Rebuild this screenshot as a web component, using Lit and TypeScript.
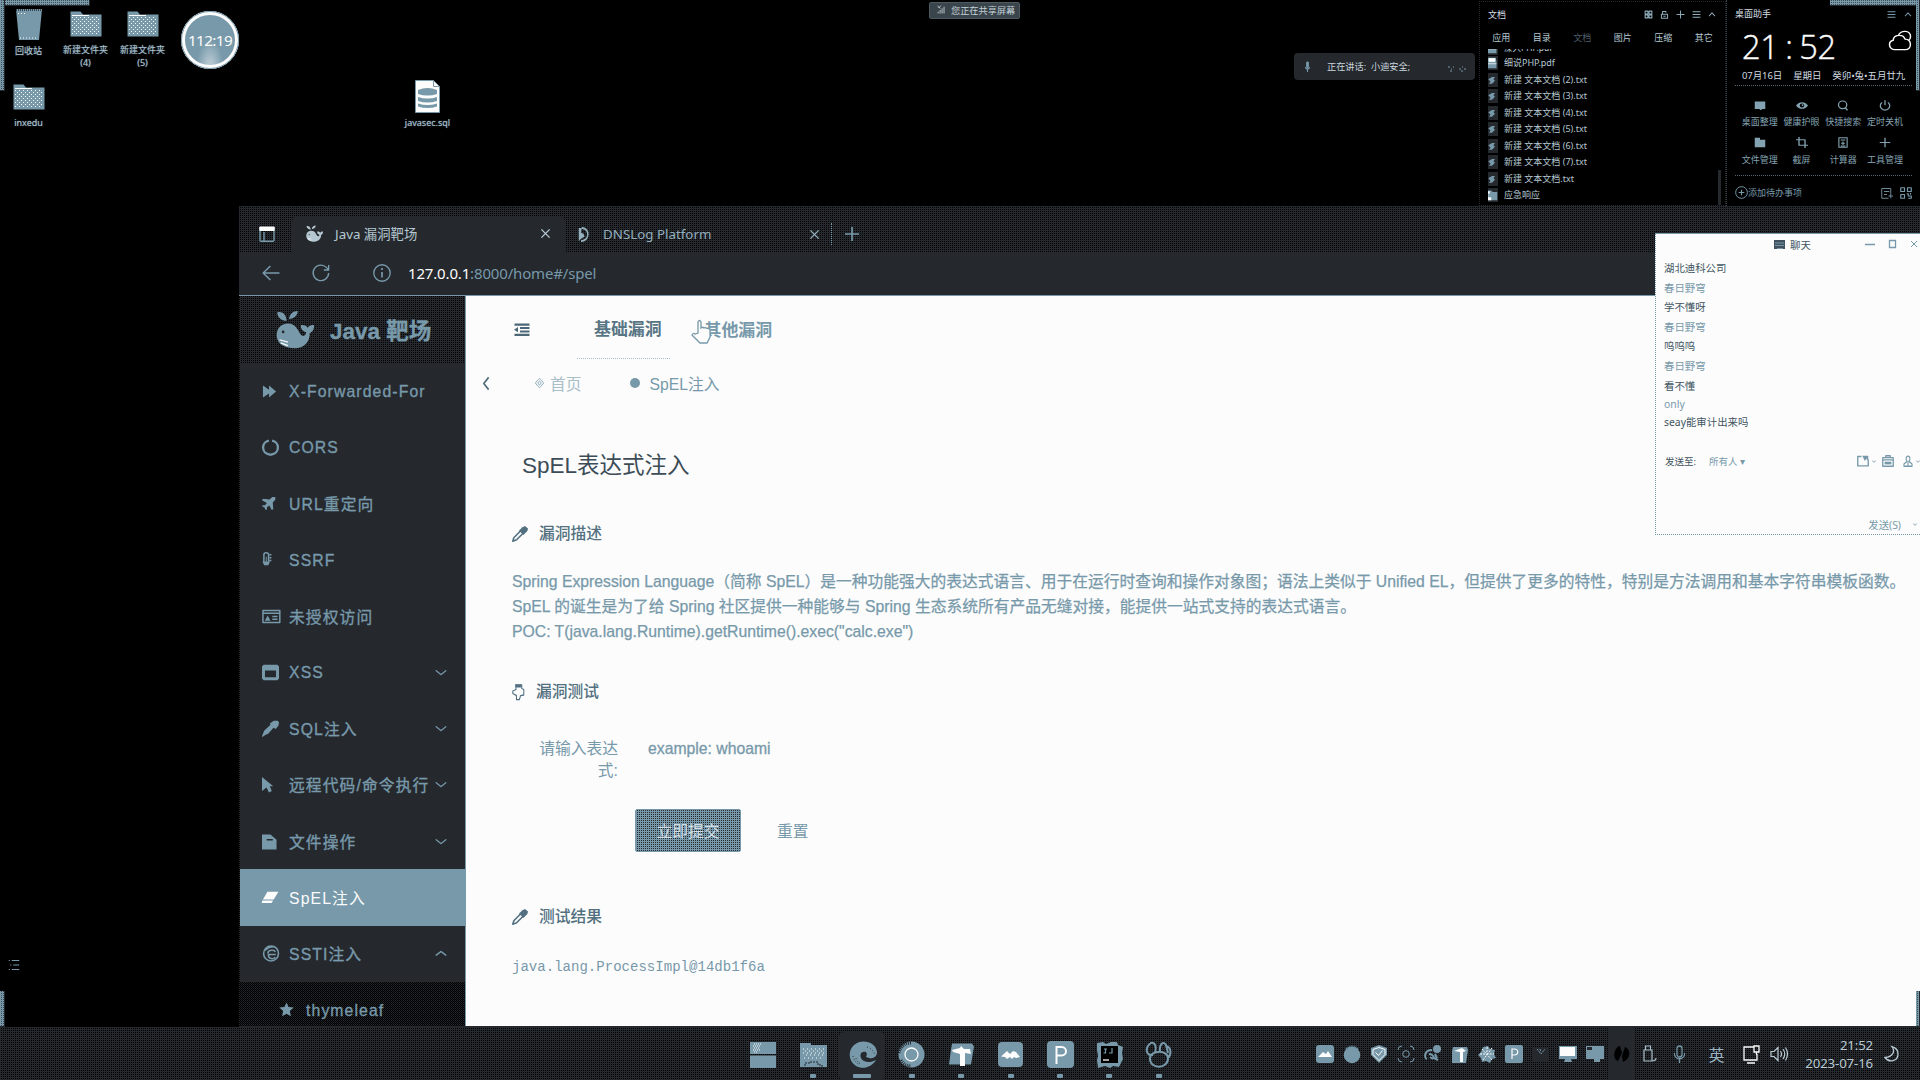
import { LitElement, html, css, svg, nothing } from "lit";
import { customElement, property } from "lit/decorators.js";

const base = css`
  * { box-sizing: border-box; }
  :host {
    --ink: #25282d;
    --steel: #7799aa;
    --paper: #fcfcfc;
    --dither: conic-gradient(#000 25%, #25282d 0) 0 0 / 2px 2px;
    display: block;
    font-family: "Noto Sans", "Noto Sans CJK SC", sans-serif;
    white-space: nowrap;
  }
  svg { display: block; flex: none; overflow: visible; }
`;

/* Every icon is drawn on a 16 x 16 grid in the current colour. */
const line = (d: string, w = 1.4) =>
  svg`<path d=${d} fill="none" stroke="currentColor" stroke-width=${w} stroke-linejoin="round"/>`;
const solid = (d: string, color = "currentColor") => svg`<path d=${d} fill=${color} fill-rule="evenodd"/>`;

const whale = svg`
  ${solid("M0.3 11C0 7.5 2.2 5.5 5 5.5C8.500 5.500 9.300 8.500 10.500 10.200C11.400 11.200 12.500 10.400 12.700 9.200C11 8.600 10.300 7.600 10.500 6.200C11.900 6 13 6.600 13.400 7.300C13.900 6.400 14.900 6 16 6.200C16.200 8 15.200 9.200 14.200 9.500C14.300 13.300 11.500 15.700 8 15.700C4 15.700.8 14.400.3 11Z")}
  ${solid("M0.5 1C2.6 0.4 4.3 1.8 4.5 4.4C2.2 4.4 0.6 3 0.5 1ZM9.2 0.4C7 0.4 5.7 1.8 5.5 3.700C7.600 3.600 9 2.300 9.200 0.400Z")}
  <circle cx="3" cy="9" r=".55" fill="#25282d"/>
  <path d="M1.500 12.200L5 13.200M2 13.500L5 14.600" stroke="#fcfcfc" stroke-width=".5"/>`;

const icons: Record<string, unknown> = {
  whale,
  grid: line("M2 2h5v5H2zM9 2h5v5H9zM2 9h5v5H2zM9 9h5v5H9z", 1.9),
  lock: line("M2.5 7.5h11v7h-11zM4.5 7V2.5h6V5M6 11h4", 1.8),
  plus: line("M8 1v14M1 8h14", 1.7),
  menu: line("M1 3h14M1 8h14M1 13h14", 1.9),
  up: line("M2 11l6-6 6 6", 1.8),
  down: line("M2 5l6 6 6-6", 1.7),
  caret: line("M1 4l7 8 7-8", 4),
  left: line("M11 1.5L5.5 8l5.500 6.500", 1.900),
  close: line("M2 2l12 12M14 2L2 14", 2),
  cloud: line("M4 15C0 14 .2 8.5 3.5 7.8C3.6 3.5 10 2.6 11.4 7C16 7.2 16 14.5 12 15ZM7 4.2C8 0 15.5-.2 15 5.2C15 6.7 14.3 7.6 13.6 8", 1),
  monitor: solid("M1 2h14v11h-4l-2 2-2-2H1z"),
  eye: svg`${solid("M0 8C4 1.5 12 1.5 16 8C12 14.5 4 14.5 0 8Z")}<circle cx="8" cy="8" r="3" fill="#000"/><circle cx="8.8" cy="7.4" r="1.3" fill="currentColor"/>`,
  search: svg`<circle cx="7.5" cy="7" r="5.5" fill="none" stroke="currentColor" stroke-width="1.7"/>${line("M11 11l3 4", 2)}`,
  power: line("M4 3.5a6.3 6.3 0 1 0 8 0M8 .5v7", 1.7),
  folder: solid("M1 1h7v3h7v11H1z"),
  crop: line("M4 0v12h12M0 4h12v12", 1.8),
  calc: line("M2.5 1h11v14h-11zM5 4.5h6M8 6.5v5M5.5 9h5M5 13h6", 1.5),
  note: line("M13 9V2H1v13h9M4 6h7M4 10h4M10 12h6M13 9v6", 1.2),
  qr: line("M1 1h5v5H1zM10 1h5v5h-5zM1 10h5v5H1zM9 9h2v3h4v3h-4M14 8v2", 1.6),
  addround: svg`<circle cx="8" cy="8" r="7.2" fill="none" stroke="currentColor" stroke-width="1.2"/>${line("M8 4.5v7M4.5 8h7", 1.4)}`,
  mic: solid("M5.5 3c0-3 5-3 5 0v5c0 3-5 3-5 0zM3.5 7c0 4.500 9 4.500 9 0v2c0 2-1.500 3-3.500 3.500V16H7v-3.500C5 12 3.500 11 3.500 9z"),
  signal: line("M2 15v-3M5.500 15V9M9 15V6M12.500 15V3M3 5l4-4M1 2l5 4", 1.6),
  miclined: line("M5.3 3.2c0-3.2 5.4-3.2 5.4 0v5c0 3.2-5.4 3.2-5.4 0zM2.5 7c0 7 11 7 11 0M8 12.500V16", 1.3),
  sidebar: svg`${line("M1 1.8h14v12.4a1 1 0 0 1-1 1H2a1 1 0 0 1-1-1zM5 6v9", 1.4)}<rect x=".3" y=".5" width="15.4" height="4.4" rx="1" fill="#fcfcfc"/>`,
  dns: svg`${solid("M1 1h4l-1 5 3 1 2 3-4 2-4 3z")}${line("M5 1C16 1 16 15 4 15", 2)}`,
  back: line("M15.5 8H1M7.5 1L1 8l6.500 7", 1.3),
  reload: line("M14.800 8a6.900 6.900 0 1 1-2-5l2 2.200M14.800 .8v4.500h-4.300", 1.2),
  info: svg`<circle cx="8" cy="8" r="7.3" fill="none" stroke="currentColor" stroke-width="1.2"/>${line("M8 7v5M8 3.600v1.700", 1.5)}`,
  forward: solid("M1 1.5L7.5 6V1.5L15 8l-7.5 6.5V10L1 14.5z"),
  ring: line("M6.5 1.5a6.6 6.6 0 0 0 0 13a6.6 6.6 0 0 0 3 0a6.6 6.6 0 0 0 0-13", 2.2),
  plane: solid("M1 3l7 .8L11 1h3.2v3L11.5 7 12 14l-1.6 1-2.600-4.800L5.300 12v2.500L4 15l-1.500-2.700L0 11l.8-1.200h2.400L5.200 7.400 0 4.400z"),
  thermo: svg`${line("M2 3c0-3 5-3 5 0v6.5c2.5 4.5-7.5 4.5-5 0zM8 3h2M8 6h2M8 9h2", 1.600)}${solid("M4 5h1v5h2v4H2v-4h2z")}`,
  card: svg`${line("M1 1.500h18v13H1zM1 4.500h18M11 8h5.500M11 11h5.500", 1.600)}${solid("M3 12.500L6 7l3 5.500z")}`,
  frame: solid("M1.500.8h13L16 2.400v11.200l-1.500 1.600h-13L0 13.600V2.400zM2.800 6v6.400h10.400V6z"),
  dropper: solid("M11 .8h3.8L16 2l-.5 3.500-2.700 3-2-1.200-5 5.700-2.800 1L.6 16 0 15.400 2 10l6-5.600-.6-1.200L11 .8z"),
  pen: svg`${line("M9 4.500L1.800 11.700.8 15.200l3.800-1.400 7-7", 1.600)}${solid("M10.500 1.200L13 0l3 2.400-.6 2.600-4 4L7 4.500z")}`,
  pointer: solid("M0 0l12 9.800H8.300L10.500 15 7.400 16.500l-2.600-5.200L0 15z"),
  file: solid("M0 .5h9l6.500 5.500v10.500H0zM5 5.400h6.500V7H5z"),
  eraser: solid("M5.800 1.800H17.500L12.500 10.200H1zM.4 11.200h11.400L10.300 13.800H-.4z"),
  ie: svg`${line("M13 9H6C6 13.500 10.500 13.800 12.500 11.500M5.500 8C5.500 4.500 11.500 4 12.500 6.500M8.500 1a7 7 0 1 0 7 7C15.500 4 12.500 1 8.500 1M3 5q3-3.500 8-3.500", 1.500)}`,
  star: solid("M8 .5l2.200 4.900 5.400.5-4 3.700 1.100 5.600L8 12.400l-4.700 2.800 1.100-5.600-4-3.700 5.400-.5z"),
  outdent: svg`${line("M.5 2h15M6 6.200h9.500M6 10.400h9.500M.5 14.600h15", 2.500)}${solid("M4 5v6.500L0 8.200z")}`,
  bulb: svg`${line("M4.500 1h7.500v3.500l2.500 1v5.500l-4 .7-1.500 4H5.500v-4L1 9.500V7l4-1.500z", 1.300)}${solid("M4.500.5h7v3h-7z")}`,
  rosette: line("M8 .7l3 2.300 4.300 5-4.300 5-3 2.300-3-2.300-4.300-5L5 3zM8 4.500L11 8l-3 3.500L5 8z", 1.3),
  cam: svg`${line("M15 6v8.500H1V2h5", 1.800)}${solid("M7 1h8v7l-2.500-3-2 3L9 5z")}`,
  bag: svg`${line("M1 3.500h14V15H1zM5 3V1h6v2M1 6.500h14", 1.700)}${solid("M3.500 9h9v3.500h-9z")}`,
  person: svg`${line("M5 4.500C5 .5 11 .5 11 4.500S9.500 8 9.500 8.500L14.500 12v3h-13v-3L6.500 8.500C6.500 8 5 7 5 4.500zM8 9v6", 1.700)}`,
  list: line("M5 2h10M7 8h8M5 14h10M1 2h1.500M3 8h1.500M1 14h1.500", 1.400),
};

const icon = (name: string, w: number, h = w, cls = "") =>
  html`<svg class=${cls} width=${w} height=${h} viewBox="0 0 16 16" preserveAspectRatio="none">${icons[name] ?? nothing}</svg>`;

@customElement("desktop-shortcut")
export class DesktopShortcut extends LitElement {
  @property() kind = "folder";
  @property() label = "";
  static styles = [base, css`
    :host { width: 57px; display: flex; flex-direction: column; align-items: center; color: var(--steel); }
    .art { height: 35px; display: flex; align-items: flex-end; }
    .label { margin-top: 6px; font-size: 9px; line-height: 13px; text-align: center; white-space: pre; color: #a4bcc8; text-shadow: 0 0 1px var(--steel); }
    .near { margin-top: 3px; }
  `];
  private art() {
    if (this.kind === "bin")
      return html`<svg width="28" height="33" viewBox="0 0 28 33"><path d="M1 1h26l-3 31H4z" fill="#7799aa"/><path d="M1 2h26" stroke="#25282d" stroke-width="1.500" stroke-dasharray="1 1"/><path d="M3 5.500h7M5 30h18" stroke="#fcfcfc" stroke-dasharray="1 2"/></svg>`;
    if (this.kind === "sql")
      return html`<svg width="25" height="33" viewBox="0 0 25 33"><path d="M.5.5h18l6 6v26H.5z" fill="#fcfcfc" stroke="#7799aa"/><path d="M18.500.5v6h6" fill="none" stroke="#7799aa"/><path d="M3 10q9.500-4 19 0v4q-9.500 3-19 0zM3 17q9.500 3 19 0v4q-9.500 3-19 0zM3 23.500q9.500 3 19 0v3q-9.500 3-19 0z" fill="#7799aa"/></svg>`;
    return html`<svg width="32" height="26" viewBox="0 0 32 26"><defs><pattern id="s" width="4" height="4" patternUnits="userSpaceOnUse"><path d="M0 0h1v1H0zM2 2h1v1H2z" fill="#fcfcfc"/></pattern></defs><path d="M.5.5h10l2.500 3h18.500v22H.5z" fill="#7799aa"/><path d="M2 5h28v19H2z" fill="url(#s)"/><path d="M2 4.500h17" stroke="#fcfcfc"/></svg>`;
  }
  render() {
    return html`<div class="art">${this.art()}</div><div class="label ${this.kind === "folder" ? "" : "near"}">${this.label}</div>`;
  }
}

@customElement("doc-panel")
export class DocPanel extends LitElement {
  static styles = [base, css`
    :host { color: #b6c9d3; font-size: 9px; line-height: 12px; border: 1px dotted #25282d; padding: 6px 9px 0 8px; display: flex; flex-direction: column; }
    .head { display: flex; align-items: center; height: 13px; color: #d3dee4; }
    .tools { margin-left: auto; display: flex; gap: 7px; color: #8fadbb; }
    .tabs { display: grid; grid-template-columns: repeat(6, 40.500px); height: 12px; margin: 11px 0 5px -8px; text-align: center; padding-left: 1px; }
    .dim { color: #4b5d68; }
    .body { display: flex; flex: 1; overflow: hidden; justify-content: space-between; margin-right: -5px; }
    .list { margin-top: -10.500px; }
    .row { height: 16.500px; display: flex; align-items: center; gap: 6px; }
    .row:first-child { font-size: 8.500px; padding-top: 2px; }
    .glyph { width: 12px; height: 14px; margin-left: -2px; background: var(--ink); display: grid; place-items: center; color: var(--steel); }
    .bar { width: 3px; height: 35px; background: var(--ink); align-self: flex-end; }
  `];
  render() {
    const files = ["深入PHP.pdf", "细说PHP.pdf", ...[2, 3, 4, 5, 6, 7].map((n) => `新建 文本文档 (${n}).txt`), "新建 文本文档.txt", "应急响应"];
    const glyph = (f: string) =>
      f.endsWith(".txt") ? svg`<path d="M3 7l5-3 4 0-2 3 2 2-4 4H4l2-3z" fill="currentColor"/>`
      : f.endsWith(".pdf") ? svg`<path d="M2 1h11l1 5v9H1V8h1z" fill="#7799aa"/><path d="M4 2h8v4H4zM2 9h12" stroke="#fcfcfc" fill="#fcfcfc"/>`
      : svg`<path d="M1 2h6l2 2h6v11H1z" fill="#7799aa"/><path d="M1 3h4v3H3v5h4v4H1z" fill="#fcfcfc"/>`;
    return html`
      <div class="head"><span>文档</span>
        <span class="tools">${icon("grid", 9)}${icon("lock", 9)}${icon("plus", 9)}${icon("menu", 9)}${icon("up", 8, 9)}</span></div>
      <div class="tabs">${["应用", "目录", "文档", "图片", "压缩", "其它"].map((t, i) => html`<span class=${i === 2 ? "dim" : ""}>${t}</span>`)}</div>
      <div class="body">
        <div class="list">${files.map((f) => html`<div class="row"><span class="glyph"><svg width="12" height="12" viewBox="0 0 16 16">${glyph(f)}</svg></span><span>${f}</span></div>`)}</div>
        <div class="bar"></div>
      </div>`;
  }
}

@customElement("assistant-panel")
export class AssistantPanel extends LitElement {
  static styles = [base, css`
    :host { color: #b9cad3; font-size: 9px; line-height: 12px; padding: 8px 8px 0 8px; border-left: 1px dotted #3a444b; display: flex; flex-direction: column; }
    .head { display: flex; align-items: center; height: 13px; color: #d3dee4; }
    .tools { margin-left: auto; display: flex; gap: 8px; color: var(--steel); }
    .now { display: flex; align-items: center; justify-content: space-between; height: 46px; padding-left: 7px; color: var(--paper); }
    .now svg { margin-top: -7px; }
    .time { font-size: 32.500px; line-height: 46px; word-spacing: -1.200px; letter-spacing: -.4px; padding-top: 6px; font-weight: 400; font-family: "Open Sans", "Noto Sans", sans-serif; font-weight: 300; -webkit-text-stroke: .4px; }
    .date { display: flex; gap: 11px; height: 20px; align-items: center; padding: 1px 0 0 7px; font-size: 9.500px; border-bottom: 1px dotted #55656f; color: #cfdbe1; letter-spacing: -.1px; }
    .tiles { display: grid; grid-template-columns: repeat(4, 41.700px); grid-auto-rows: 37.500px; padding: 14px 0 0 4px; height: 93px; border-bottom: 1px dotted #55656f; color: #84a3b2; }
    .tile { display: flex; flex-direction: column; align-items: center; gap: 5.500px; }
    .foot { display: flex; align-items: center; gap: 7px; height: 31px; padding-top: 3px; color: var(--steel); }
    .foot .add { margin-right: auto; display: flex; align-items: center; }
  `];
  render() {
    const tiles = [["monitor", "桌面整理"], ["eye", "健康护眼"], ["search", "快捷搜索"], ["power", "定时关机"], ["folder", "文件管理"], ["crop", "截屏"], ["calc", "计算器"], ["plus", "工具管理"]];
    return html`
      <div class="head"><span>桌面助手</span><span class="tools">${icon("menu", 9)}${icon("up", 8, 9)}</span></div>
      <div class="now"><span class="time">21 : 52</span>${icon("cloud", 24, 21)}</div>
      <div class="date"><span>07月16日</span><span>星期日</span><span>癸卯•兔•五月廿九</span></div>
      <div class="tiles">${tiles.map(([i, t]) => html`<div class="tile">${icon(i, 12, 11)}<span>${t}</span></div>`)}</div>
      <div class="foot"><span class="add">${icon("addround", 13)}<span>添加待办事项</span></span>${icon("note", 12)}${icon("qr", 12)}</div>`;
  }
}

@customElement("chat-window")
export class ChatWindow extends LitElement {
  static styles = [base, css`
    :host { background: var(--paper); border: 1px dotted var(--steel); border-top: 1px solid var(--steel); border-right: 0; color: #3f5562; font-size: 10.400px; display: flex; flex-direction: column; }
    .title { height: 20px; display: grid; grid-template-columns: 1fr auto; align-items: center; padding-left: 118px; }
    .name, .controls, .to { display: flex; align-items: center; }
    .name { gap: 5px; }
    .controls { gap: 14px; color: var(--steel); padding-right: 2px; }
    .log { padding: 5px 0 0 8px; }
    .msg { line-height: 19.600px; height: 19.600px; }
    .from { color: var(--steel); }
    .tight { height: 17.500px; line-height: 17.500px; }
    .to { margin-top: 20px; height: 20px; padding-left: 9px; font-size: 9.500px; color: var(--steel); }
    .to b { font-weight: 400; color: #3f525d; margin-right: 13px; }
    .tools { margin-left: auto; display: flex; align-items: center; gap: 3px; }
    .gap { margin-right: 3px; }
    .send { margin-top: auto; height: 19px; display: flex; justify-content: flex-end; align-items: center; gap: 12px; color: var(--steel); padding-right: 3px; }
  `];
  render() {
    const log = [["", "湖北迪科公司"], ["from", "春日野穹"], ["", "学不懂呀"], ["from", "春日野穹"], ["", "呜呜呜"], ["from", "春日野穹"], ["", "看不懂"], ["from tight", "only"], ["tight", "seay能审计出来吗"]];
    return html`
      <div class="title">
        <span class="name"><svg width="11" height="9" viewBox="0 0 11 9"><path d="M0 0h11v9H0z" fill="#3f525d"/><path d="M1 3h9M1 5.500h9M3 8.500h6" stroke="#7799aa"/></svg>聊天</span>
        <span class="controls">
          <svg width="10" height="9" viewBox="0 0 10 9"><path d="M0 4.500h10" stroke="currentColor" stroke-width="1.500"/></svg>
          <svg width="7" height="8" viewBox="0 0 7 8"><path d="M.5.5h6v7h-6z" fill="none" stroke="currentColor" stroke-width="1.300"/></svg>
          ${icon("close", 8)}</span>
      </div>
      <div class="log">${log.map(([c, t]) => html`<div class="msg ${c}">${t}</div>`)}</div>
      <div class="to"><b>发送至:</b><span>所有人 ▾</span>
        <span class="tools">${icon("cam", 12)}${icon("caret", 4, 3, "gap")}${icon("bag", 12)}<span class="gap"></span>${icon("person", 10, 12)}${icon("caret", 4, 3)}</span></div>
      <div class="send"><span>发送(S)</span>${icon("caret", 4, 3)}</div>`;
  }
}

@customElement("range-page")
export class RangePage extends LitElement {
  static styles = [base, css`
    :host { display: grid; grid-template-columns: 227px 1fr; height: 731px; overflow: hidden; font-family: "Liberation Sans", "Noto Sans CJK SC", sans-serif; font-size: 15.750px; color: var(--steel); border-top: 1px solid var(--steel); }
    .side { background: var(--ink); border-right: 1px solid var(--steel); border-left: 1px dotted #000; overflow: hidden; -webkit-text-stroke: .35px; }
    .logo { height: 67px; display: flex; align-items: center; gap: 16px; padding-left: 36px; background: var(--dither); font-weight: 700; font-size: 22.500px; }
    .logo span { padding-bottom: 2px; }
    .item { height: 56.250px; display: flex; align-items: center; padding: 0 17px 0 22px; letter-spacing: 1.120px; }
    .item .latin { padding-top: 2px; }
    .item .mark { width: 27px; }
    .item .more { margin-left: auto; }
    .on { background: var(--steel); color: var(--paper); -webkit-text-stroke: 0; }
    .sub { background: conic-gradient(#25282d 25%, #000 0 50%, #16181b 0 75%, #000 0) 0 0 / 2px 2px; padding-left: 39px; }
    .sub .mark { width: 27px; }
    .main { background: var(--paper); overflow: hidden; }
    .nav { height: 64px; display: flex; font-size: 16.900px; font-weight: 700; align-items: center; padding: 0 0 0 48px; }
    .nav > svg { margin-top: 2px; color: #4c6876; }
    .nav .tab { margin-left: 47px; padding: 3px 8px 0 17px; height: 62px; line-height: 59px; border-bottom: 1px dotted #a5bcc8; color: #587584; }
    .nav .cursor { margin: 7px -6px 0 21px; z-index: 1; }
    .crumbs { height: 46px; display: flex; align-items: center; padding-left: 13px; }
    .crumbs > svg { color: #4f6b79; }
    .crumbs .home { display: flex; align-items: center; gap: 6px; margin: 0 48px 0 42px; color: #a9bec9; }
    .home svg { color: var(--steel); }
    .dot { width: 10px; height: 10px; border-radius: 50%; background: var(--steel); margin-right: 10px; }
    .content { padding: 42px 18px 0 46px; }
    h1 { margin: 0 0 0 10px; font-size: 22.500px; line-height: 36px; font-weight: 400; color: #3c4d57; }
    h2 { margin: 0; font-size: 15.750px; line-height: 26px; font-weight: 500; display: flex; align-items: center; gap: 11px; color: #527080; }
    .t1 { margin-top: 37px; }
    .desc { margin-top: 22px; line-height: 25.200px; -webkit-text-stroke: .25px var(--steel); }
    .form { display: grid; grid-template-columns: 106px 1fr; column-gap: 30px; margin-top: 32px; }
    .label { text-align: right; line-height: 22.500px; white-space: normal; padding: 1px 0 0 26px; }
    .hint { line-height: 22.500px; padding-top: 1px; -webkit-text-stroke: .3px var(--steel); }
    .actions { grid-column: 2; display: flex; align-items: center; gap: 36px; margin: 26px 0 0 -13px; }
    .submit { width: 106px; height: 43px; border: 1px solid var(--steel); border-radius: 2px; background: conic-gradient(#25282d 25%, #7799aa 0) 0 0 / 2px 2px; color: #d4dfe5; line-height: 43px; text-align: center; }
    .result { margin-top: 25px; font: 14.060px/25px "Liberation Mono", monospace; }
    .t2 { margin-top: 34px; }
    .t3 { margin-top: 52px; }
  `];
  render() {
    const items: [string, string, string?, number?][] = [
      ["forward", "X-Forwarded-For"], ["ring", "CORS", undefined, 17], ["plane", "URL重定向"], ["thermo", "SSRF"], ["card", "未授权访问"],
      ["frame", "XSS", "down", 17], ["dropper", "SQL注入", "down", 17], ["pointer", "远程代码/命令执行", "down"], ["file", "文件操作", "down"],
      ["eraser", "SpEL注入"], ["ie", "SSTI注入", "up", 17],
    ];
    const latin = (t: string) => (/^[\x00-\x7f]+$/.test(t) ? "latin" : "");
    return html`
      <aside class="side">
        <div class="logo">${icon("whale", 38, 39)}<span>Java 靶场</span></div>
        ${items.map(([i, t, more, w]) => html`<div class="item ${i === "eraser" ? "on" : ""}"><span class="mark">${icon(i, w ?? 15)}</span><span class=${latin(t)}>${t}</span>${more ? icon(more, 14, 11, "more") : nothing}</div>`)}
        <div class="item sub"><span class="mark">${icon("star", 15)}</span><span class="latin">thymeleaf</span></div>
      </aside>
      <main class="main">
        <div class="nav">${icon("outdent", 16, 13)}<span class="tab">基础漏洞</span>
          <svg class="cursor" width="20" height="25" viewBox="0 0 20 25"><path d="M7 14V3q1.500-3 3 0v6q1.500-1.500 3 0 1.500-1 3 .500 1.500-.8 3 1V18l-3 6H9l-8-8q1-2.500 3-1z" fill="#fcfcfc" stroke="#7799aa" stroke-width="1.300"/></svg>
          <span>其他漏洞</span></div>
        <div class="crumbs">${icon("left", 14, 15)}<span class="home">${icon("rosette", 9, 10)}首页</span><span class="dot"></span><span>SpEL注入</span></div>
        <div class="content">
          <h1>SpEL表达式注入</h1>
          <h2 class="t1">${icon("pen", 16)}漏洞描述</h2>
          <div class="desc">Spring Expression Language（简称 SpEL）是一种功能强大的表达式语言、用于在运行时查询和操作对象图；语法上类似于 Unified EL，但提供了更多的特性，特别是方法调用和基本字符串模板函数。<br>SpEL 的诞生是为了给 Spring 社区提供一种能够与 Spring 生态系统所有产品无缝对接，能提供一站式支持的表达式语言。<br>POC: T(java.lang.Runtime).getRuntime().exec("calc.exe")</div>
          <h2 class="t2">${icon("bulb", 13, 16)}漏洞测试</h2>
          <div class="form">
            <div class="label">请输入表达式:</div><div class="hint">example: whoami</div>
            <div class="actions"><span class="submit">立即提交</span><span>重置</span></div>
          </div>
          <h2 class="t3">${icon("pen", 16)}测试结果</h2>
          <div class="result">java.lang.ProcessImpl@14db1f6a</div>
        </div>
      </main>`;
  }
}

@customElement("browser-window")
export class BrowserWindow extends LitElement {
  static styles = [base, css`
    :host { background: var(--ink); color: var(--steel); }
    .strip { height: 46px; display: flex; align-items: flex-end; background: var(--dither); border-top: 1px solid #25282d; font-size: 13.350px; }
    .tab, .pre { height: 36px; display: flex; align-items: center; }
    .pre { width: 53px; padding-left: 20px; }
    .tab { padding: 0 14px; }
    .a { width: 273px; background: var(--ink); border-radius: 6px 6px 0 0; padding: 0 14px 2px 14px; gap: 12px; color: #b5c8d2; }
    .b { width: 266px; gap: 13px; padding: 0 11px 0 13px; color: #94b0be; }
    .x { margin-left: auto; }
    .plus { height: 22px; margin-bottom: 7px; display: flex; align-items: center; border-left: 1px dotted var(--steel); padding-left: 12px; }
    .bar { height: 43px; display: flex; align-items: center; padding: 0 0 1px 23px; font-size: 15px; }
    .bar svg + svg { margin-left: 32px; }
    .bar svg + .r2 { margin-left: 43px; }
    .url { margin-left: 17px; letter-spacing: -.16px; }
    .url b { font-weight: 400; color: var(--paper); }
  `];
  render() {
    return html`
      <div class="strip">
        <div class="pre">${icon("sidebar", 16)}</div>
        <div class="tab a">${icon("whale", 17)}<span>Java 漏洞靶场</span>${icon("close", 11, 11, "x")}</div>
        <div class="tab b">${icon("dns", 12, 15)}<span>DNSLog Platform</span>${icon("close", 11, 11, "x")}</div>
        <div class="plus">${icon("plus", 16)}</div>
      </div>
      <div class="bar">${icon("back", 18, 16)}${icon("reload", 18)}${icon("info", 18, 18, "r2")}<span class="url"><b>127.0.0.1</b>:8000/home#/spel</span></div>
      <range-page></range-page>`;
  }
}

@customElement("task-bar")
export class TaskBar extends LitElement {
  static styles = [base, css`
    :host { background: var(--dither); height: 53px; display: grid; grid-template-columns: 739px 1fr auto; color: var(--steel); border-top: 1px solid var(--ink); }
    .apps { grid-column: 2; display: flex; padding-top: 4px; }
    .app { width: 49.400px; height: 48px; padding-top: 9px; display: flex; flex-direction: column; align-items: center; justify-content: space-between; }
    .now { background: var(--ink); border-radius: 5px; width: 46px; margin: 0 1.700px; }
    .pip { width: 6px; height: 4px; border-radius: 1px; background: var(--steel); margin-bottom: 2px; }
    .now .pip { width: 18px; }
    .none { visibility: hidden; }
    .tray { display: flex; align-items: center; color: var(--steel); }
    .slot { width: 27px; height: 52px; display: grid; place-items: center; }
    .lit { background: var(--ink); }
    .w30 { width: 34px; }
    .lang { width: 41px; font-size: 16px; text-align: center; color: #9ab3c0; }
    .w28 { width: 28px; color: #b9cbd4; }
    .clock { width: 80px; text-align: right; font-size: 13.250px; line-height: 18px; color: #b9cbd4; letter-spacing: -.15px; }
    .moon { width: 38px; padding-right: 1px; color: #b9cbd4; margin-right: 9px; }
  `];
  render() {
    const s = "#7799aa", w = "#fcfcfc", k = "#25282d";
    const apps = [
      svg`<path d="M0 1h26v12H0zM0 14.500h26V27H0z" fill=${s}/><path d="M4 3h7M3 5h8M4 7h6M3 9h7M4 11h4" stroke=${w} stroke-dasharray="1 1"/>`,
      svg`<path d="M0 2h11v2h16v22H0z" fill=${s}/><path d="M3 8h22M5 10h20M3 12h22M6 14h18M4 17h20" stroke=${w} stroke-dasharray="1 3"/><path d="M5 25v-3h5v-1h8v3h4v2" fill="none" stroke=${k} stroke-dasharray="2 1"/>`,
      svg`<path d="M27 19C23 26 14 29 7 25C-1 20-1 9 5 4C13-3 27 1 28 11C28 16 24 18 20 17L17 16C19 12 17 10 14 11C10 12 11 18 15 20C19 22 23 21 27 19Z" fill=${s}/><path d="M4 15q1 6 7 9M7 17q1 4 5 6M18 6q6 2 8 8" fill="none" stroke=${k} stroke-dasharray="1 2"/>`,
      svg`<circle cx="13.500" cy="13.500" r="13" fill=${s}/><path d="M2 8q4-6 11-6M1 12q1-5 5-8M3 19q3 6 10 6" fill="none" stroke=${k} stroke-width="3" stroke-dasharray="1 1"/><circle cx="13.500" cy="13.500" r="6.500" fill=${s} stroke=${w} stroke-width="1.300"/>`,
      svg`<path d="M4 2.500h20l2 3-3 18H1l2-15z" fill=${s}/><path d="M4 9l8-2 1-2 3 3h6l1 5-6-1v13h-5V13l-7-2z" fill=${w}/>`,
      svg`<rect x="1" y="1" width="25" height="25" rx="4" fill=${s}/><path d="M4 15.500l6-5.500 3 3 3-3 3 1 4 5-4 1-2-1-2 2-2-2-3 2-2-2z" fill=${w}/>`,
      svg`<rect y="0" width="27" height="27" rx="4" fill=${s}/><path d="M9.500 23V6h5c6 0 6 8.500 0 8.500h-5" fill="none" stroke=${w} stroke-width="2"/>`,
      svg`<path d="M1 2l6-1 3 2 5-2h6l1 3 5 2-1 6 1 6-4 8-6-1-3 2-5-2-7 2-1-8 1-4-1-6z" fill=${s}/><path d="M5 5h17v17H5z" fill="#000"/><path d="M8 8h3M9.500 8v4h-2M16 7v5h-3" fill="none" stroke=${s} stroke-width="1.200"/><path d="M7 19h6" stroke=${w} stroke-width="1.300"/>`,
      svg`<path d="M8 14C0 15 0 6 6 2c4-1 6 4 4 9M15 11C14 2 19 0 21 4l2 8M21 5c5 1 6 8 2 12M5 17.500C5 9 23 8 23 17.500C23 28 5 29 5 17.500z" fill="none" stroke=${s} stroke-width="2"/>`,
    ];
    const tray = [
      svg`<rect width="18" height="18" rx="3" fill=${s}/><path d="M2 12l5-5 3 2 2-3 4 6z" fill=${w}/>`,
      svg`<circle cx="9" cy="10" r="8.300" fill=${s}/><path d="M3 4q6-5 12 0" stroke=${s} stroke-dasharray="1 1" fill="none" stroke-width="2"/>`,
      svg`<path d="M9 0l8 3v7l-8 8-8-8V3z" fill=${s}/><path d="M9 2.500l6 2v5l-6 6-6-6v-5zM5.500 7.500l3 3 4-5" fill="none" stroke=${w}/>`,
      svg`<circle cx="9" cy="9" r="3.300" fill="none" stroke=${s}/><path d="M1 5q0-4 4-4M13 1q4 0 4 4M17 13q0 4-4 4M5 17q-4 0-4-4" fill="none" stroke=${s}/>`,
      svg`<circle cx="13" cy="4" r="4" fill=${s}/><path d="M8 5C0 5 0 13 3 14M5 9q4 0 5 4l4 2M11 9l2 4M6 12l3 2" fill="none" stroke=${s} stroke-width="2"/>`,
      svg`<path d="M2 2h14l1 3-2 13H1V6z" fill=${s}/><path d="M3 6l8-3 4 3-3 1v10H9V7z" fill=${w}/>`,
      svg`<path d="M5 2l5-1 2 3 5 1-1 4 2 4-4 1-2 4-4-2-4 1-1-4-3-3 3-3z" fill=${s}/><path d="M4 4l10 11M14 3L5 15M2 9h14M9 2v6" stroke=${w} stroke-dasharray="2 1.200"/>`,
      svg`<rect width="18" height="18" rx="2" fill=${s}/><path d="M7 14V4h2c5 0 5 6 0 6H7" fill="none" stroke=${w} stroke-width="1.200"/>`,
      svg`<rect x="1" y="3" width="16" height="14" fill=${k}/><path d="M5 4l4 5 4-5M8 4l1 3" stroke=${s} fill="none" stroke-dasharray="2 1"/>`,
      svg`<path d="M0 1h18v13h-6l1 3H5l1-3H0z" fill=${s}/><path d="M1 2h15v9H1z" fill=${w}/>`,
      svg`<path d="M0 1h18v13h-4v3H8v-3H0z" fill=${s}/><path d="M1 2h5v3H1z" fill=${k}/>`,
      svg`<path d="M7 1C1 2-1 14 5 16L9 8zM12 2c6 2 6 12-2 15l-1-6z" fill="#000"/>`,
      svg`<path d="M4 5h8v11H4zM5.500 5V1h5v4M12 16q4 0 4-3" fill="none" stroke="#a9bfca" stroke-width="1.200"/>`,
    ];
    return html`
      <div class="apps">${apps.map((a, i) => html`<div class="app ${i === 2 ? "now" : ""}"><svg width="27" height="27" viewBox="0 0 27 27">${a}</svg><span class="pip ${i ? "" : "none"}"></span></div>`)}</div>
      <div class="tray">
        ${tray.map((t, i) => html`<span class="slot ${i === 11 ? "lit" : ""}"><svg width="18" height="18" viewBox="0 0 18 18">${t}</svg></span>`)}
        <span class="slot w30">${icon("miclined", 15, 18)}</span>
        <span class="lang">英</span>
        <span class="slot w28"><svg width="19" height="19" viewBox="0 0 19 19"><path d="M12 2H2v13h13v-6M5 18h8M12 1h5v6h-5zM14.500 7v3" fill="none" stroke="#fcfcfc" stroke-width="1.300"/></svg></span>
        <span class="slot w28"><svg width="18" height="16" viewBox="0 0 18 16"><path d="M1 5.500h3l4-4v13l-4-4H1zM10.500 5q2 3 0 6M13 3q3.500 5 0 10M15.500 1.500q4 6.500 0 13" fill="none" stroke="currentColor" stroke-width="1.200"/></svg></span>
        <span class="clock">21:52<br>2023-07-16</span>
        <span class="slot moon"><svg width="15" height="16" viewBox="0 0 15 16"><path d="M8 .7C12 6 8 11 1 11.500C5 17 14 15.500 14 8C14 4 11 1.500 8 .7Z" fill="none" stroke="currentColor" stroke-width="1.300"/></svg></span>
      </div>`;
  }
}

@customElement("app-root")
export class AppRoot extends LitElement {
  static styles = [base, css`
    :host { position: relative; width: 1920px; height: 1080px; background: #000; overflow: hidden; color: var(--steel); }
    .at { position: absolute; }
    .edge { background: conic-gradient(#3d4b54 25%, #7799aa 0) 0 0 / 2px 2px; border: solid var(--ink); border-width: 0 1px 1px 0; }
    .tlh { left: 0; top: 0; width: 90px; height: 6px; }
    .tlv { left: 0; top: 0; width: 5px; height: 91px; }
    .trh { right: 0; top: 0; width: 90px; height: 6px; }
    .trv { right: 0; top: 0; width: 4px; height: 91px; }
    .blv { left: 0; top: 991px; width: 5px; height: 36px; }
    .brv { right: 0; top: 991px; width: 4px; height: 36px; }
    .bin { left: 0; top: 6px; } .f4 { left: 57px; top: 2px; } .f5 { left: 114px; top: 2px; }
    .inx { left: 0; top: 75px; } .sql { left: 399px; top: 78px; }
    .timer { left: 181px; top: 11px; width: 58px; height: 58px; border-radius: 50%; border: 4px solid var(--paper); background: radial-gradient(ellipse at 50% 105%, #b4c6d0 0 8%, var(--steel) 38%); outline: 1px solid var(--steel); outline-offset: -1px; color: var(--paper); font-size: 15.300px; display: grid; place-items: center; letter-spacing: -.6px; }
    .share { left: 929px; top: 2px; width: 91px; height: 17px; background: #3a444b; border: 1px solid #4c5a63; border-radius: 2px; display: flex; align-items: center; gap: 5px; padding: 0 0 2px 7px; font-size: 9.200px; color: #c3d1d9; }
    .toast { left: 1294px; top: 53px; width: 181px; height: 27px; background: var(--ink); border-radius: 4px; display: flex; align-items: center; padding: 0 9px 1px 9px; font-size: 9.200px; color: #c8d6dd; }
    .toast > svg:first-child { color: var(--steel); }
    .toast .who { margin-left: 15px; white-space: pre; }
    .wave { margin: 6px 0 0 auto; }
    .docs { left: 1479px; top: 1px; width: 247px; height: 205px; }
    .aide { left: 1726px; top: 0; width: 194px; height: 206px; }
    .browser { left: 239px; top: 206px; width: 1681px; height: 821px; }
    .chat { left: 1655px; top: 233px; width: 265px; height: 302px; }
    .tasks { left: 0; top: 1027px; width: 1920px; }
    .widget { left: 8px; top: 959px; }
  `];
  render() {
    return html`
      <desktop-shortcut class="at bin" kind="bin" label="回收站"></desktop-shortcut>
      <desktop-shortcut class="at f4" .label=${"新建文件夹\n(4)"}></desktop-shortcut>
      <desktop-shortcut class="at f5" .label=${"新建文件夹\n(5)"}></desktop-shortcut>
      <desktop-shortcut class="at inx" label="inxedu"></desktop-shortcut>
      <desktop-shortcut class="at sql" kind="sql" label="javasec.sql"></desktop-shortcut>
      <div class="at timer">112:19</div>
      <div class="at widget">${icon("list", 12, 12)}</div>
      <div class="at share">${icon("signal", 9, 9)}<span>您正在共享屏幕</span></div>
      <div class="at toast">${icon("mic", 9, 11)}<span class="who">正在讲话:  小迪安全;</span>
        <svg class="wave" width="18" height="6" viewBox="0 0 18 6"><path d="M0 1h2M3 3h1M5 1h1M2 5h2M11 3h2M14 1h1M13 5h2M16 3h2" stroke="#7799aa"/></svg></div>
      <doc-panel class="at docs"></doc-panel>
      <assistant-panel class="at aide"></assistant-panel>
      <browser-window class="at browser"></browser-window>
      <chat-window class="at chat"></chat-window>
      <i class="at edge tlh"></i><i class="at edge tlv"></i><i class="at edge trh"></i><i class="at edge trv"></i><i class="at edge blv"></i><i class="at edge brv"></i>
      <task-bar class="at tasks"></task-bar>`;
  }
}
